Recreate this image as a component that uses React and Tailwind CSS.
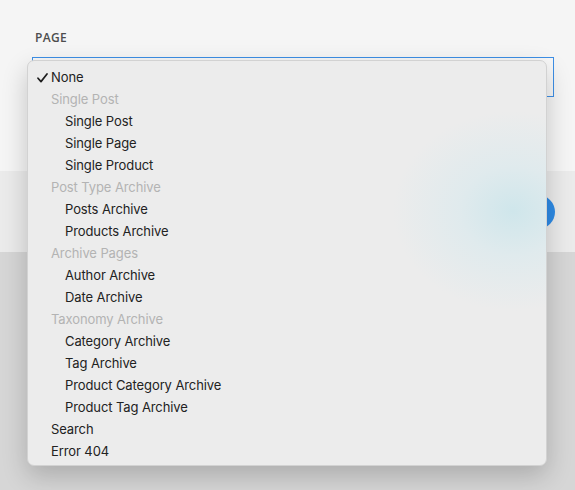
import React from "react";

const items = [
  { label: "None", kind: "top", checked: true },
  { label: "Single Post", kind: "group" },
  { label: "Single Post", kind: "sub" },
  { label: "Single Page", kind: "sub" },
  { label: "Single Product", kind: "sub" },
  { label: "Post Type Archive", kind: "group" },
  { label: "Posts Archive", kind: "sub" },
  { label: "Products Archive", kind: "sub" },
  { label: "Archive Pages", kind: "group" },
  { label: "Author Archive", kind: "sub" },
  { label: "Date Archive", kind: "sub" },
  { label: "Taxonomy Archive", kind: "group" },
  { label: "Category Archive", kind: "sub" },
  { label: "Tag Archive", kind: "sub" },
  { label: "Product Category Archive", kind: "sub" },
  { label: "Product Tag Archive", kind: "sub" },
  { label: "Search", kind: "top" },
  { label: "Error 404", kind: "top" },
];

function MenuItem({ item }) {
  const pad = item.kind === "sub" ? "pl-[37px]" : "pl-[23px]";
  const color = item.kind === "group" ? "text-[#b3b3b3]" : "text-[#222222]";
  return (
    <div className={`relative h-[22px] flex items-center ${pad} ${color}`}>
      {item.checked && (
        <svg
          className="absolute left-[9px] top-[7px]"
          width="11"
          height="10"
          viewBox="0 0 11 10"
          fill="none"
        >
          <path d="M1 5.2 L4 8.6 L10 1" stroke="#1e1e1e" strokeWidth="1.7" strokeLinecap="round" strokeLinejoin="round" />
        </svg>
      )}
      {item.label}
    </div>
  );
}

export default function App() {
  return (
    <div className="relative w-[575px] h-[490px] overflow-hidden bg-[#d6d6d6] font-['Inter',sans-serif]">
      {/* modal panel */}
      <div className="bg-[#f5f5f5] h-[171px] pt-[31px] pl-[32px] pr-[21px]">
        <div className="pl-[3px] text-[12px] font-semibold tracking-[0.03em] text-[#4d4d4d] leading-[14px] font-['Open_Sans',sans-serif]">
          PAGE
        </div>
        <div className="mt-[12px] h-[40px] border border-[#3d8fe6] bg-[#f7f7f7]" />
      </div>
      <div className="bg-[#ebebeb] h-[81px] flex items-center justify-end pr-[20px]">
        <div className="w-[34px] h-[34px] rounded-full bg-[#2e8be6]" />
      </div>

      {/* dropdown menu */}
      <div className="absolute left-[27px] top-[60px] w-[520px] h-[406px] rounded-[7px] border border-[#d2d2d2] bg-[#ececec] bg-[radial-gradient(ellipse_120px_100px_at_485px_150px,#cfe6eb_0%,rgba(214,233,238,0.55)_45%,rgba(236,236,236,0)_100%)] shadow-[0_10px_26px_rgba(0,0,0,0.2)] pt-[5px] text-[13px] tracking-[-0.1px] leading-[22px]">
        {items.map((item, i) => (
          <MenuItem key={i} item={item} />
        ))}
      </div>
    </div>
  );
}
